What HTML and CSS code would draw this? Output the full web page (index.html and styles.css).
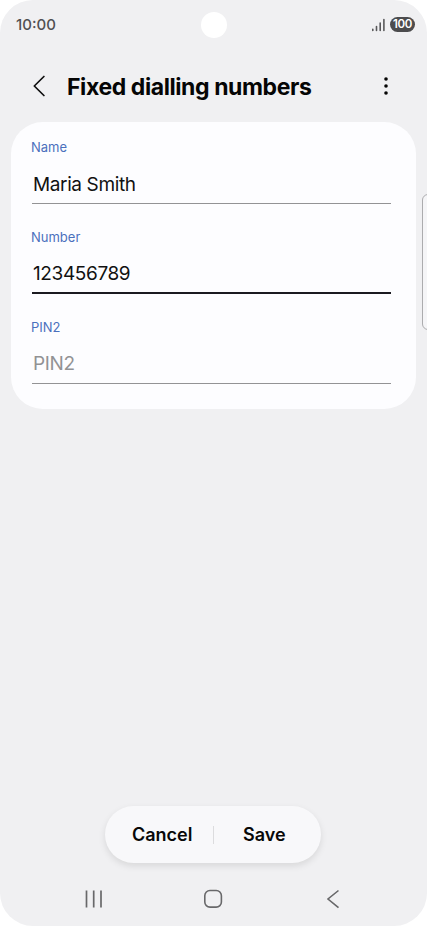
FILE: index.html
```
<!DOCTYPE html>
<html lang="en">
<head>
<meta charset="utf-8">
<meta name="viewport" content="width=device-width, initial-scale=1">
<title>Fixed dialling numbers</title>
<link rel="stylesheet" href="styles.css">
</head>
<body>
<main class="phone">
  <header class="status">
    <span class="clock">10:00</span>
    <span class="camera"></span>
    <span class="indicators">
      <svg width="14" height="14" viewBox="0 0 14 14" fill="none" stroke="#58585a" stroke-width="1.6" stroke-linecap="round"><path d="M1.8 11.2v1.2M5.5 8.5v3.9M9.2 5v7.4M12.9 1.6v10.8"/></svg>
      <span class="battery">100</span>
    </span>
  </header>
  <div class="titlebar">
    <svg class="back" width="12" height="22" viewBox="0 0 12 22" fill="none" stroke="#111" stroke-width="1.7" stroke-linecap="round" stroke-linejoin="round"><path d="M10.9 1.5 1.3 11l9.6 9.5"/></svg>
    <h1>Fixed dialling numbers</h1>
    <svg class="more" width="4" height="18" viewBox="0 0 4 18" fill="#050505"><circle cx="2" cy="2" r="1.8"/><circle cx="2" cy="9" r="1.8"/><circle cx="2" cy="16" r="1.8"/></svg>
  </div>
  <section class="card">
    <div class="field">
      <div class="label">Name</div>
      <div class="value name">Maria Smith</div>
    </div>
    <div class="field active">
      <div class="label">Number</div>
      <div class="value">123456789</div>
    </div>
    <div class="field">
      <div class="label">PIN2</div>
      <div class="value placeholder">PIN2</div>
    </div>
  </section>
  <div class="edge-panel"></div>
  <div class="actions">
    <span class="action cancel">Cancel</span>
    <span class="divider"></span>
    <span class="action save">Save</span>
  </div>
  <nav class="nav">
    <svg width="18" height="20" viewBox="0 0 18 20" fill="none" stroke="#68686a" stroke-width="1.7"><path d="M1.5 1.5v17M8.7 1.5v17M16 1.5v17"/></svg>
    <svg class="home" width="20" height="20" viewBox="0 0 20 20" fill="none" stroke="#68686a" stroke-width="1.6"><rect x="1.8" y="1.5" width="16.6" height="16.6" rx="5.2"/></svg>
    <svg width="14" height="20" viewBox="0 0 14 20" fill="none" stroke="#68686a" stroke-width="1.6"><path d="M12.5 1.5 2 10l10.5 8.6"/></svg>
  </nav>
</main>
</body>
</html>
```
FILE: styles.css
```
* { box-sizing: border-box; }
body {
  margin: 0;
  background: #fff;
  font-family: Inter, Roboto, sans-serif;
}
.phone {
  position: relative;
  display: flex;
  flex-direction: column;
  width: 427px;
  height: 926px;
  background: #f0f0f2;
  border-radius: 33px;
  overflow: hidden;
}
.status {
  display: grid;
  grid-template-columns: 1fr 26px 1fr;
  align-items: center;
  height: 50px;
  padding: 0 12px 0 16px;
}
.clock {
  margin-top: -1px;
  font-size: 15px;
  font-weight: 500;
  line-height: 18px;
  color: #505052;
}
.camera {
  width: 26px;
  height: 26px;
  border-radius: 50%;
  background: #fff;
  margin-left: -2px;
}
.indicators {
  display: flex;
  justify-content: flex-end;
  align-items: center;
  gap: 5px;
  margin-top: -1px;
}
.battery {
  width: 25px;
  height: 15px;
  border-radius: 8px;
  background: #4c4c4e;
  color: #fff;
  font-size: 11.5px;
  font-weight: 600;
  line-height: 15px;
  letter-spacing: -0.4px;
  text-align: center;
}
.titlebar {
  display: flex;
  align-items: center;
  height: 72px;
  padding: 0 39px 0 33px;
}
.more { margin-left: auto; }
h1 {
  margin: 2px 0 0 22px;
  font-size: 23px;
  font-weight: 700;
  line-height: 30px;
  letter-spacing: -0.41px;
  white-space: nowrap;
  color: #050505;
}
.card {
  height: 287px;
  margin: 0 11px;
  padding: 16px 25px 0 21px;
  border-radius: 32px;
  background: #fdfdff;
}
.field {
  height: 66px;
  margin-bottom: 24px;
  border-bottom: 1px solid #939395;
}
.field.active {
  border-bottom: 2px solid #1b1a20;
}
.label {
  margin-left: -1px;
  font-size: 13px;
  line-height: 18px;
  color: #4b70bd;
}
.value {
  margin: 16px 0 0 1px;
  font-size: 19px;
  line-height: 24px;
  letter-spacing: -0.38px;
  color: #111;
}
.value.name { margin-top: 17px; }
.value.placeholder { color: #929294; }
.edge-panel {
  position: absolute;
  left: 422px;
  top: 194px;
  width: 12px;
  height: 136px;
  border: 1px solid #acacae;
  border-radius: 6px;
  background: #f5f5f7;
}
.actions {
  display: flex;
  align-items: center;
  width: 216px;
  height: 57px;
  margin: 397px auto 0 105px;
  border-radius: 29px;
  background: #f8f8fa;
  box-shadow: 0 3px 7px rgba(0, 0, 0, 0.1);
}
.action {
  font-size: 18px;
  font-weight: 600;
  line-height: 24px;
  color: #080808;
}
.cancel { width: 108px; padding-left: 27px; }
.divider { width: 1px; height: 18px; background: #dcdcde; }
.save { padding-left: 29px; }
.nav {
  display: flex;
  justify-content: space-between;
  align-items: center;
  height: 20px;
  margin: 26px 87px 0 85px;
}
.home { margin-right: 4px; }
```
